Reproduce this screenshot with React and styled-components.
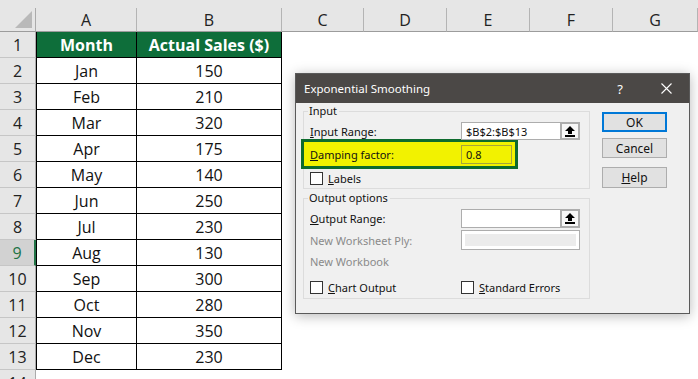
import React from "react";
import styled, { createGlobalStyle } from "styled-components";

const Global = createGlobalStyle`
  html, body { margin: 0; padding: 0; background: #fff; }
  body { width: 698px; height: 379px; overflow: hidden; }
`;

const Page = styled.div`
  position: relative;
  width: 698px;
  height: 379px;
  overflow: hidden;
  font-family: "Open Sans", "Noto Sans", sans-serif;
`;

const TopStrip = styled.div`
  height: 8px;
  background: #e6e6e6;
`;

const Sheet = styled.div`
  display: grid;
  grid-template-columns: 36px 101px 145px 82px 83px 83px 83px 85px;
  grid-template-rows: 24px repeat(14, 26px);
`;

const Corner = styled.div`
  background: #e6e6e6;
  border-right: 1px solid #ababab;
  border-bottom: 1px solid #9c9c9c;
  display: flex;
  align-items: flex-end;
  justify-content: flex-end;
  padding: 0 3px 3px 0;
  box-sizing: border-box;
`;

const ColHead = styled.div`
  background: #e6e6e6;
  border-right: 1px solid #b4b4b4;
  border-bottom: 1px solid #9c9c9c;
  box-sizing: border-box;
  display: flex;
  align-items: center;
  justify-content: center;
  font-size: 16px;
  color: #222;
`;

const RowHead = styled.div`
  background: ${(p) => (p.$active ? "#d2d2d2" : "#e6e6e6")};
  color: ${(p) => (p.$active ? "#217346" : "#222")};
  border-bottom: 1px solid #c6c6c6;
  border-right: ${(p) => (p.$active ? "2px solid #217346" : "1px solid #ababab")};
  box-sizing: border-box;
  display: flex;
  align-items: center;
  justify-content: center;
  font-size: 16px;
`;

const Cell = styled.div`
  box-sizing: border-box;
  display: flex;
  align-items: center;
  justify-content: center;
  font-size: 16px;
  color: #111;
  background: ${(p) => (p.$head ? "#0e6e3a" : "#fff")};
  ${(p) => p.$head && "color: #fff; font-weight: 700;"}
  ${(p) => p.$table && "border-right: 1px solid #000; border-bottom: 1px solid #000;"}
  ${(p) => p.$first && "border-left: 1px solid #000;"}
`;

/* dialog */

const Dialog = styled.div`
  position: absolute;
  left: 295px;
  top: 73px;
  width: 395px;
  height: 241px;
  box-sizing: border-box;
  background: #f0f0f0;
  border: 1px solid #5a5a5a;
  box-shadow: 0 2px 12px rgba(0, 0, 0, 0.28);
  font-family: "Noto Sans", "Open Sans", sans-serif;
  font-size: 11px;
  color: #111;
`;

const TitleBar = styled.div`
  height: 29px;
  background: #4b4846;
  color: #fff;
  display: flex;
  align-items: center;
  padding-left: 8px;
  font-size: 11.5px;
`;

const Title = styled.div`
  flex: 1;
`;

const TitleBtn = styled.div`
  width: ${(p) => p.$w}px;
  display: flex;
  align-items: center;
  justify-content: center;
  font-size: 13px;
`;

const Body = styled.div`
  display: flex;
  gap: 12px;
  padding: 1px 0 0 7px;
`;

const Left = styled.div`
  width: 287px;
  display: flex;
  flex-direction: column;
`;

const Group = styled.fieldset`
  margin: ${(p) => p.$mt || 0}px 0 0 0;
  padding: 0 6px ${(p) => p.$pb}px 6px;
  border: 1px solid #dcdcdc;
  min-width: 0;
`;

const Legend = styled.legend`
  padding: 0 2px 0 1px;
  margin-left: -2px;
  line-height: 14px;
  font-size: 11px;
`;

const Row = styled.div`
  display: flex;
  align-items: center;
  height: ${(p) => p.$h}px;
  margin-top: ${(p) => p.$mt || 0}px;
  color: ${(p) => (p.$dim ? "#8a8a8a" : "#111")};
`;

const Label = styled.div`
  width: 151px;
  flex: none;
`;

const Field = styled.div`
  width: 99px;
  height: 100%;
  box-sizing: border-box;
  background: #fff;
  border: 1px solid #adadad;
  border-right: none;
  display: flex;
  align-items: center;
  padding-left: 4px;
`;

const PickBtn = styled.div`
  width: 20px;
  height: 100%;
  box-sizing: border-box;
  border: 2px solid #adadad;
  background: #f7f7f7;
  display: flex;
  align-items: center;
  justify-content: center;
`;

const DisabledField = styled.div`
  width: 119px;
  height: 100%;
  box-sizing: border-box;
  background: #fff;
  border: 1px solid #adadad;
  padding: 3px;
  & > div {
    height: 100%;
    background: #ececec;
  }
`;

const Highlight = styled.div`
  display: flex;
  align-items: center;
  height: 30px;
  width: 217px;
  box-sizing: border-box;
  margin: -1px 0 0 -9px;
  padding: 0 3px 0 6px;
  background: #f2f200;
  border: 3px solid #0e6b2e;
`;

const YellowInput = styled.div`
  width: 51px;
  height: 19px;
  box-sizing: border-box;
  border: 1px solid #a6a63a;
  display: flex;
  align-items: center;
  padding-left: 4px;
`;

const Check = styled.span`
  width: 13px;
  height: 13px;
  box-sizing: border-box;
  border: 1px solid #333;
  background: #fff;
  margin-right: 5px;
  flex: none;
`;

const CheckItem = styled.div`
  display: flex;
  align-items: center;
  width: ${(p) => p.$w || "auto"};
`;

const Buttons = styled.div`
  display: flex;
  flex-direction: column;
  width: 65px;
  padding-top: 8px;
`;

const Button = styled.div`
  height: ${(p) => p.$h || 20}px;
  margin-top: ${(p) => p.$mt || 0}px;
  box-sizing: border-box;
  background: #e1e1e1;
  border: ${(p) => (p.$primary ? "2px solid #0078d7" : "1px solid #adadad")};
  display: flex;
  align-items: center;
  justify-content: center;
  font-size: 12px;
`;

const UpArrow = () => (
  <svg width="10" height="11" viewBox="0 0 10 11">
    <path d="M5 0 L10 5 H7 V8 H3 V5 H0 Z" fill="#000" />
    <rect x="0" y="9" width="10" height="2" fill="#000" />
  </svg>
);

const CloseIcon = () => (
  <svg width="11" height="11" viewBox="0 0 11 11">
    <path d="M0.5 0.5 L10.5 10.5 M10.5 0.5 L0.5 10.5" stroke="#fff" strokeWidth="1.1" />
  </svg>
);

const cols = ["A", "B", "C", "D", "E", "F", "G"];
const data = [
  ["Jan", 150], ["Feb", 210], ["Mar", 320], ["Apr", 175], ["May", 140], ["Jun", 250],
  ["Jul", 230], ["Aug", 130], ["Sep", 300], ["Oct", 280], ["Nov", 350], ["Dec", 230],
];

export default function App() {
  const rows = [["Month", "Actual Sales ($)"], ...data];
  return (
    <Page>
      <Global />
      <TopStrip />
      <Sheet>
        <Corner>
          <svg width="17" height="17" viewBox="0 0 17 17">
            <path d="M17 0 V17 H0 Z" fill="#b9b9b9" />
          </svg>
        </Corner>
        {cols.map((c) => (
          <ColHead key={c}>{c}</ColHead>
        ))}
        {rows.map((r, i) => (
          <React.Fragment key={i}>
            <RowHead $active={i + 1 === 9}>{i + 1}</RowHead>
            <Cell $table $first $head={i === 0}>{r[0]}</Cell>
            <Cell $table $head={i === 0}>{r[1]}</Cell>
            {cols.slice(2).map((c) => (
              <Cell key={c} />
            ))}
          </React.Fragment>
        ))}
        <RowHead>14</RowHead>
        {cols.map((c) => (
          <Cell key={c} />
        ))}
      </Sheet>

      <Dialog>
        <TitleBar>
          <Title>Exponential Smoothing</Title>
          <TitleBtn $w={46}>?</TitleBtn>
          <TitleBtn $w={46}><CloseIcon /></TitleBtn>
        </TitleBar>
        <Body>
          <Left>
            <Group $pb={3}>
              <Legend>Input</Legend>
              <Row $h={18} $mt={4}>
                <Label><u>I</u>nput Range:</Label>
                <Field>$B$2:$B$13</Field>
                <PickBtn><UpArrow /></PickBtn>
              </Row>
              <Highlight>
                <Label><u>D</u>amping factor:</Label>
                <YellowInput>0.8</YellowInput>
              </Highlight>
              <Row $h={14} $mt={2}>
                <CheckItem><Check /><u>L</u>abels</CheckItem>
              </Row>
            </Group>
            <Group $mt={2} $pb={4}>
              <Legend>Output options</Legend>
              <Row $h={19} $mt={4}>
                <Label><u>O</u>utput Range:</Label>
                <Field />
                <PickBtn><UpArrow /></PickBtn>
              </Row>
              <Row $h={20} $mt={2} $dim>
                <Label>New Worksheet Ply:</Label>
                <DisabledField><div /></DisabledField>
              </Row>
              <Row $h={18} $mt={2} $dim>New Workbook</Row>
              <Row $h={14} $mt={10}>
                <CheckItem $w="151px"><Check /><u>C</u>hart Output</CheckItem>
                <CheckItem><Check /><u>S</u>tandard Errors</CheckItem>
              </Row>
            </Group>
          </Left>
          <Buttons>
            <Button $primary>OK</Button>
            <Button $mt={6}>Cancel</Button>
            <Button $mt={9} $h={21}><span><u>H</u>elp</span></Button>
          </Buttons>
        </Body>
      </Dialog>
    </Page>
  );
}
